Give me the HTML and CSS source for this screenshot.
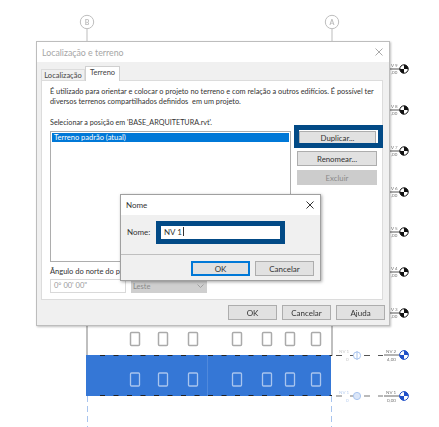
FILE: index.html
```html
<!DOCTYPE html>
<html lang="pt-BR">
<head>
<meta charset="utf-8">
<title>Localização e terreno</title>
<link rel="stylesheet" href="styles.css">
</head>
<body>
<div class="canvas">
<svg class="drawing" width="439" height="427" viewBox="0 0 439 427">
  <defs>
    <g id="mark">
      <line x1="-14" y1="0" x2="-4" y2="0" stroke="#555" stroke-width="1"/>
      <circle r="4.2" fill="#fff" stroke="#111" stroke-width="1"/>
      <path d="M0 0V-4.2A4.2 4.2 0 0 1 4.2 0ZM0 0V4.2A4.2 4.2 0 0 1 -4.2 0Z" fill="#111"/>
    </g>
    <g id="markblue">
      <line x1="-20" y1="0" x2="-4" y2="0" stroke="#666" stroke-width="1"/>
      <circle r="4.4" fill="#fff" stroke="#1f50c8" stroke-width="1"/>
      <path d="M0 0V-4.4A4.4 4.4 0 0 1 4.4 0ZM0 0V4.4A4.4 4.4 0 0 1 -4.4 0Z" fill="#1f50c8"/>
    </g>
    <rect id="win" width="9" height="13" rx="1" fill="none" stroke="#aaa" stroke-width="1.5"/>
    <rect id="winb" width="9" height="13" rx="1" fill="none" stroke="#a9c5ee" stroke-width="1.3"/>
  </defs>

  <circle cx="87" cy="22" r="6.7" fill="#fff" stroke="#bdbdbd"/>
  <text x="87" y="25" class="bubble">B</text>
  <line x1="87" y1="29" x2="87" y2="42" stroke="#bdbdbd"/>
  <circle cx="332" cy="22" r="6.7" fill="#fff" stroke="#bdbdbd"/>
  <text x="332" y="25" class="bubble">A</text>
  <line x1="332" y1="29" x2="332" y2="42" stroke="#bdbdbd"/>

  <text x="391" y="67" class="lvl">V 9</text><text x="391" y="74" class="lvl">,00</text>
  <text x="391" y="108" class="lvl">V 8</text><text x="391" y="115" class="lvl">,00</text>
  <text x="391" y="149" class="lvl">V 7</text><text x="391" y="156" class="lvl">,00</text>
  <text x="391" y="190" class="lvl">V 6</text><text x="391" y="197" class="lvl">,00</text>
  <text x="391" y="230" class="lvl">V 5</text><text x="391" y="237" class="lvl">,00</text>
  <text x="391" y="270" class="lvl">V 4</text><text x="391" y="277" class="lvl">,00</text>
  <text x="391" y="311" class="lvl">V 3</text><text x="391" y="318" class="lvl">,00</text>
  <use href="#mark" x="404" y="69"/>
  <use href="#mark" x="404" y="110"/>
  <use href="#mark" x="404" y="151"/>
  <use href="#mark" x="404" y="192"/>
  <use href="#mark" x="404" y="232"/>
  <use href="#mark" x="404" y="272"/>
  <use href="#mark" x="404" y="313"/>

  <line x1="87" y1="320" x2="87" y2="356" stroke="#aaa" stroke-width="1.5"/>
  <line x1="332" y1="320" x2="332" y2="356" stroke="#aaa" stroke-width="1.5"/>
  <line x1="87.5" y1="396" x2="87.5" y2="427" stroke="#a8c4ee" stroke-dasharray="6 4"/>
  <line x1="331.5" y1="396" x2="331.5" y2="427" stroke="#a8c4ee" stroke-dasharray="6 4"/>

  <use href="#win" x="130.500" y="332.500"/>
  <use href="#win" x="158.500" y="332.500"/>
  <use href="#win" x="188.500" y="332.500"/>
  <use href="#win" x="232.500" y="332.500"/>
  <use href="#win" x="262.500" y="332.500"/>
  <use href="#win" x="285.500" y="332.500"/>
  <use href="#win" x="311.500" y="332.500"/>

  <rect x="86" y="355" width="245" height="41" fill="#3577d6"/>
  <line x1="207.500" y1="355" x2="207.500" y2="396" stroke="#5089dc"/>
  <use href="#winb" x="130.500" y="373"/>
  <use href="#winb" x="158.500" y="373"/>
  <use href="#winb" x="188.500" y="373"/>
  <use href="#winb" x="232.500" y="373"/>
  <use href="#winb" x="262.500" y="373"/>
  <use href="#winb" x="285.500" y="373"/>
  <use href="#winb" x="311.500" y="373"/>

  <line x1="100" y1="355.500" x2="332" y2="355.500" stroke="#222" stroke-dasharray="5 8.5"/>
  <line x1="100" y1="395.500" x2="332" y2="395.500" stroke="#222" stroke-dasharray="5 8.5"/>

  <line x1="336" y1="355.500" x2="383" y2="355.500" stroke="#555" stroke-width="1.2" stroke-dasharray="6 8"/>
  <line x1="336" y1="396" x2="383" y2="396" stroke="#777" stroke-width="1.2" stroke-dasharray="6 8"/>
  <circle cx="357" cy="355.500" r="3.600" fill="#fff" stroke="#a8c4ee"/>
  <line x1="357" y1="351" x2="357" y2="360" stroke="#a8c4ee"/>
  <circle cx="357" cy="396" r="3.600" fill="#dbe6f8" stroke="#a8c4ee"/>
  <text x="339" y="353" class="lvl faint">NV 1</text>
  <text x="346" y="361" class="lvl faint">0</text>
  <text x="339" y="394" class="lvl faint blue">NV 1</text>
  <text x="346" y="402" class="lvl faint blue">0</text>
  <text x="386" y="353" class="lvl">NV 2</text>
  <text x="387" y="361" class="lvl">4,00</text>
  <text x="386" y="394" class="lvl">NV 1</text>
  <text x="387" y="402" class="lvl">0,00</text>
  <use href="#markblue" x="404" y="355"/>
  <use href="#markblue" x="404" y="396"/>
</svg>

<section class="dialog site">
  <header class="titlebar site-title">
    <span>Localização e terreno</span>
    <svg class="close" width="8" height="8" viewBox="0 0 8 8"><path d="M0.500 0.500L7.500 7.500M7.500 0.500L0.500 7.500" stroke="#aaa" fill="none"/></svg>
  </header>
  <div class="site-body">
    <div class="tabs">
      <span class="tab">Localização</span>
      <span class="tab active">Terreno</span>
    </div>
    <div class="panel">
      <p class="intro">É utilizado para orientar e colocar o projeto no terreno e com relação a outros edifícios. É possível ter diversos terrenos compartilhados definidos&nbsp; em um projeto.</p>
      <p class="select-label">Selecionar a posição em 'BASE_ARQUITETURA.rvt'.</p>
      <div class="columns">
        <div class="list"><div class="list-item">Terreno padrão (atual)</div></div>
        <div class="side">
          <div class="btn duplicate">Duplicar...</div>
          <div class="btn">Renomear...</div>
          <div class="btn disabled">Excluir</div>
        </div>
      </div>
      <div class="angle-label">Ângulo do norte do projeto</div>
      <div class="angle-row">
        <div class="angle-input">0° 00' 00"</div>
        <div class="angle-select">
          <span>Leste</span>
          <svg width="7" height="4" viewBox="0 0 7 4"><path d="M0.500 0.500L3.500 3.500L6.500 0.500" stroke="#a0a0a0" fill="none"/></svg>
        </div>
      </div>
    </div>
    <div class="footer">
      <div class="btn foot">OK</div>
      <div class="btn foot">Cancelar</div>
      <div class="btn foot">Ajuda</div>
    </div>
  </div>
</section>

<div class="highlight"></div>

<section class="dialog name">
  <header class="titlebar name-title">
    <span>Nome</span>
    <svg class="close" width="8" height="8" viewBox="0 0 8 8"><path d="M0.500 0.500L7.500 7.500M7.500 0.500L0.500 7.500" stroke="#333" fill="none"/></svg>
  </header>
  <div class="name-body">
    <label class="name-label">Nome:</label>
    <div class="name-frame"><div class="name-input">NV 1<i class="caret"></i></div></div>
  </div>
  <div class="name-footer">
    <div class="btn nbtn default">OK</div>
    <div class="btn nbtn">Cancelar</div>
  </div>
</section>
</div>
</body>
</html>
```
FILE: styles.css
```css
* { box-sizing: border-box; }
html, body { margin: 0; padding: 0; background: #fff; }
body { font-family: "Lato", "Open Sans", sans-serif; font-size: 8px; color: #333; }
.canvas { position: relative; width: 439px; height: 427px; overflow: hidden; filter: blur(0.3px); }
.drawing { position: absolute; left: 0; top: 0; }
.bubble { font-size: 7px; font-weight: 700; fill: #bbb; text-anchor: middle; }
.lvl { font-size: 4.500px; fill: #777; }
.faint { fill: #c9c9c9; }
.blue { fill: #b9cff0; }

.dialog { position: absolute; background: #f0f0f0; display: flex; flex-direction: column; }
.site { left: 36px; top: 41px; width: 354px; height: 285px; border: 1px solid #bdbdbd; box-shadow: 1px 1px 2px rgba(0,0,0,.25); }
.titlebar { background: #fff; display: flex; align-items: center; justify-content: space-between; flex: none; }
.site-title { height: 20px; padding: 0 6px 0 5px; color: #a6a6a6; font-size: 8.800px; }
.site-body { flex: 1; display: flex; flex-direction: column; padding: 4px 6px 5px 4px; }

.tabs { display: flex; align-items: flex-end; height: 14px; flex: none; font-size: 7.500px; }
.tab { height: 11px; width: 44px; text-align: center; line-height: 11px; background: #f0f0f0; border: 1px solid #dcdcdc; border-bottom: 0; color: #444; }
.tab.active { height: 15px; width: 35px; background: #fff; line-height: 12px; margin-bottom: -1px; border-color: #d0d0d0; z-index: 1; position: relative; }

.panel { flex: none; height: 220px; background: #fff; border: 1px solid #dcdcdc; padding: 6px 4px 0 8px; display: flex; flex-direction: column; font-size: 7.500px; }
.intro { margin: 0; line-height: 9.500px; height: 19px; font-size: 7.350px; }
.select-label { margin: 12px 0 0; line-height: 10px; height: 10px; font-size: 7.200px; }
.columns { display: flex; gap: 6px; margin-top: 3px; height: 131px; flex: none; }
.list { width: 241px; border: 1px solid #adadad; background: #fff; padding: 1px; flex: none; }
.list-item { background: #0078d7; color: #fff; height: 9px; line-height: 9px; padding-left: 2px; }
.side { display: flex; flex-direction: column; gap: 4px; width: 80px; font-size: 7.800px; }
.btn { background: #e1e1e1; border: 1px solid #adadad; display: flex; align-items: center; justify-content: center; height: 15px; color: #333; flex: none; }
.duplicate { height: 13px; margin: 0 1px 3px 2px; }
.disabled { border-color: #ccc; background: #ccc; color: #8a8a8a; }
.angle-label { margin-top: 5px; line-height: 10px; height: 10px; }
.angle-row { display: flex; gap: 5px; margin-top: 2px; align-items: flex-start; }
.angle-input { width: 76px; height: 14px; border: 1px solid #d9d9d9; padding-left: 3px; line-height: 12px; color: #999; background: #fff; }
.angle-select { width: 76px; height: 14px; background: #cfcfcf; color: #8a8a8a; display: flex; align-items: center; justify-content: space-between; padding: 0 3px 0 2px; }

.footer { display: flex; justify-content: flex-end; gap: 5px; margin: 5px -2px 0 0; }
.foot { width: 49px; height: 15px; }

.highlight { position: absolute; left: 294px; top: 125px; width: 89px; height: 23px; border: 5px solid #024a86; }

.name { left: 120px; top: 194px; width: 201px; height: 87px; border: 1px solid #a0a0a0; box-shadow: 1px 1px 3px rgba(0,0,0,.35); }
.name-title { height: 20px; padding: 0 6px 0 5px; color: #333; }
.name-body { height: 40px; display: flex; align-items: center; padding: 0 0 5px 6px; gap: 8px; border-bottom: 1px solid #bfbfbf; flex: none; }
.name-label { width: 21px; flex: none; }
.name-frame { width: 129px; height: 23px; border: 5px solid #024a86; flex: none; }
.name-input { height: 13px; background: #fff; padding-left: 3px; line-height: 13px; color: #333; }
.caret { display: inline-block; width: 1px; height: 9px; background: #333; vertical-align: -1px; margin-left: 1px; }
.name-footer { flex: 1; display: flex; justify-content: flex-end; align-items: flex-start; gap: 5px; padding: 6px 6px 0 0; }
.nbtn { width: 59px; height: 15px; }
.default { border: 1px solid #0078d7; box-shadow: inset 0 0 0 1px #0078d7; }
```
